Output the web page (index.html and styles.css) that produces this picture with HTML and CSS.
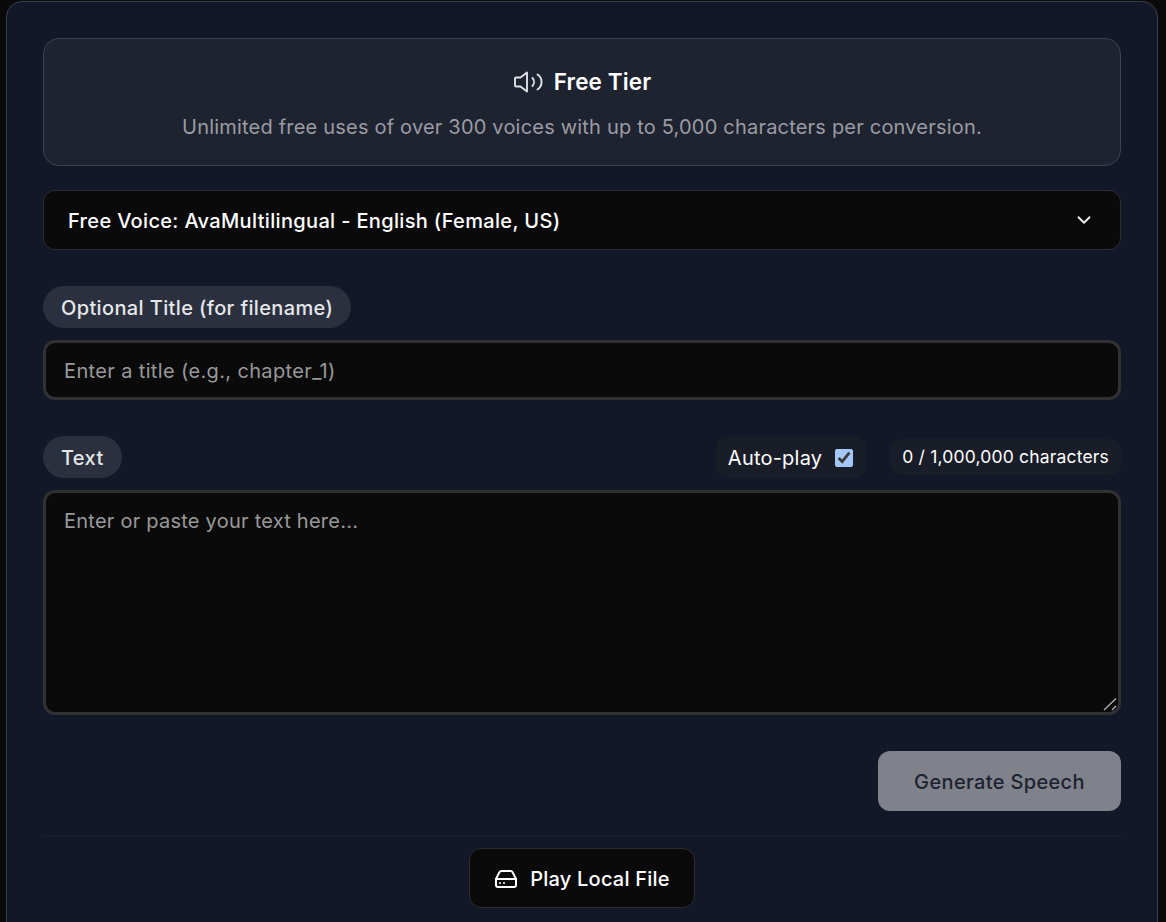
FILE: index.html
```html
<!DOCTYPE html>
<html lang="en">
<head>
<meta charset="utf-8">
<title>Free Tier</title>
<link rel="stylesheet" href="styles.css">
</head>
<body>
<main class="card">
  <section class="tier">
    <h2 class="tier-title">
      <svg class="tier-icon" viewBox="0 0 30 24" fill="none" stroke="currentColor" stroke-width="1.9" stroke-linecap="round" stroke-linejoin="round"><path d="M14 2.5 7.5 7.5H3a1 1 0 0 0-1 1v7a1 1 0 0 0 1 1h4.5l6.5 5z"/><path d="M19.5 8a6 6 0 0 1 0 8"/><path d="M24.5 4.5a9 9 0 0 1 0 15"/></svg>
      <span>Free Tier</span>
    </h2>
    <p class="tier-text">Unlimited free uses of over 300 voices with up to 5,000 characters per conversion.</p>
  </section>

  <div class="select-wrap">
    <select class="voice">
      <option>Free Voice: AvaMultilingual - English (Female, US)</option>
    </select>
    <svg class="chevron" viewBox="0 0 24 24" fill="none" stroke="currentColor" stroke-width="2" stroke-linecap="round" stroke-linejoin="round"><path d="m6 9 6 6 6-6"/></svg>
  </div>

  <div class="field title-field">
    <div class="field-head"><label class="pill" for="title">Optional Title (for filename)</label></div>
    <input class="box line" id="title" type="text" placeholder="Enter a title (e.g., chapter_1)">
  </div>

  <div class="field text-field">
    <div class="field-head">
      <label class="pill" for="text">Text</label>
      <div class="meta">
        <label class="autoplay">Auto-play <input class="check" type="checkbox" checked></label>
        <span class="count">0 / 1,000,000 characters</span>
      </div>
    </div>
    <div class="area-wrap">
      <textarea class="box area" id="text" placeholder="Enter or paste your text here..."></textarea>
      <svg class="grip" viewBox="0 0 14 14" fill="none" stroke="currentColor" stroke-width="1.3"><path d="M1 13 13 1.5"/><path d="M9 13l4-4"/></svg>
    </div>
  </div>

  <div class="actions"><button class="generate" type="button" disabled>Generate Speech</button></div>

  <div class="local">
    <button class="play" type="button">
      <svg class="play-icon" viewBox="0 0 24 24" fill="none" stroke="currentColor" stroke-width="2" stroke-linecap="round" stroke-linejoin="round"><path d="M22 12H2"/><path d="M5.45 5.11 2 12v6a2 2 0 0 0 2 2h16a2 2 0 0 0 2-2v-6l-3.45-6.89A2 2 0 0 0 16.76 4H7.24a2 2 0 0 0-1.79 1.11z"/><path d="M6 16h.01"/><path d="M10 16h.01"/></svg>
      <span>Play Local File</span>
    </button>
  </div>
</main>
</body>
</html>
```
FILE: styles.css
```css
* { box-sizing: border-box; }
html, body { margin: 0; height: 922px; overflow: hidden; }
body {
  background: #0a0a0a;
  color: #fff;
  font-family: Inter, "Liberation Sans", sans-serif;
  padding: 1px 8px 0 6px;
  color-scheme: dark;
}
.card {
  height: 960px;
  background: #121828;
  border: 1px solid #3a404d;
  border-radius: 16px;
  padding: 36px;
}
.tier {
  height: 128px;
  background: #1e2330;
  border: 1px solid #3c4352;
  border-radius: 16px;
  padding-top: 28px;
  text-align: center;
}
.tier-title {
  margin: 0;
  display: flex;
  justify-content: center;
  align-items: center;
  gap: 11px;
  font-size: 22.5px;
  line-height: 30px;
  font-weight: 600;
  letter-spacing: 0.12px;
}
.tier-icon { width: 30px; height: 24px; color: #e0e2e6; }
.tier-text {
  margin: 16px 0 0;
  font-size: 20px;
  line-height: 28px;
  letter-spacing: 0.2px;
  color: #9b9ca3;
}
.select-wrap { position: relative; margin-top: 24px; }
.voice {
  display: block;
  width: 100%;
  height: 60px;
  appearance: none;
  background: #0a0a0a;
  color: #fff;
  border: 1px solid #2b2d31;
  border-radius: 12px;
  padding: 2px 24px 0;
  font: 550 20px Inter, "Liberation Sans", sans-serif;
  letter-spacing: 0.34px;
}
.chevron {
  position: absolute;
  right: 26px;
  top: 19px;
  width: 22px;
  height: 22px;
  color: #f0f0f0;
  pointer-events: none;
}
.field-head {
  display: flex;
  justify-content: space-between;
  align-items: center;
  margin-bottom: 12px;
}
.title-field { margin-top: 36px; }
.text-field { margin-top: 36px; }
.pill {
  display: block;
  height: 42px;
  padding: 1px 18px 0;
  border-radius: 21px;
  background: #2a303d;
  color: #e5e7eb;
  font-size: 20px;
  font-weight: 550;
  letter-spacing: 0.37px;
  line-height: 42px;
}
.box {
  display: block;
  width: 100%;
  background: #0a0a0a;
  color: #fff;
  border: 3px solid #303133;
  border-radius: 12px;
  padding: 1px 18px 0;
  font: 400 20px Inter, "Liberation Sans", sans-serif;
  letter-spacing: 0.36px;
  outline: none;
}
.box::placeholder { color: #999; opacity: 1; }
.line { height: 60px; }
.area-wrap { position: relative; }
.area { height: 225px; padding-top: 14px; line-height: 28px; letter-spacing: 0.24px; resize: none; }
.grip {
  position: absolute;
  right: 4px;
  bottom: 4px;
  width: 14px;
  height: 14px;
  color: #b0b0b0;
  pointer-events: none;
}
.meta { display: flex; align-items: center; gap: 24px; }
.autoplay {
  display: flex;
  align-items: center;
  gap: 13px;
  height: 42px;
  padding: 1px 13px 0 12px;
  border-radius: 12px;
  background: #191d27;
  font-size: 20px;
  letter-spacing: 0.22px;
}
.check { width: 18px; height: 18px; margin: 0; accent-color: #a5c8fb; }
.count {
  height: 36px;
  padding: 0 12px;
  border-radius: 12px;
  background: #191d27;
  font-size: 17.5px;
  letter-spacing: 0.18px;
  line-height: 36px;
}
.actions { display: flex; justify-content: flex-end; margin-top: 36px; }
.generate {
  width: 243px;
  height: 60px;
  padding: 1px 0 0;
  border: 0;
  border-radius: 12px;
  background: #7f828b;
  color: #1d2230;
  font: 550 20px Inter, "Liberation Sans", sans-serif;
  letter-spacing: 0.35px;
}
.local {
  margin-top: 24px;
  padding-top: 12px;
  border-top: 1px solid #1b202d;
  display: flex;
  justify-content: center;
}
.play {
  display: flex;
  align-items: center;
  gap: 12px;
  height: 60px;
  padding: 1px 24px 0;
  background: #0a0a0a;
  color: #fff;
  border: 1px solid #2b2d31;
  border-radius: 12px;
  font: 550 20px Inter, "Liberation Sans", sans-serif;
  letter-spacing: 0.22px;
}
.play-icon { width: 24px; height: 24px; }
```
